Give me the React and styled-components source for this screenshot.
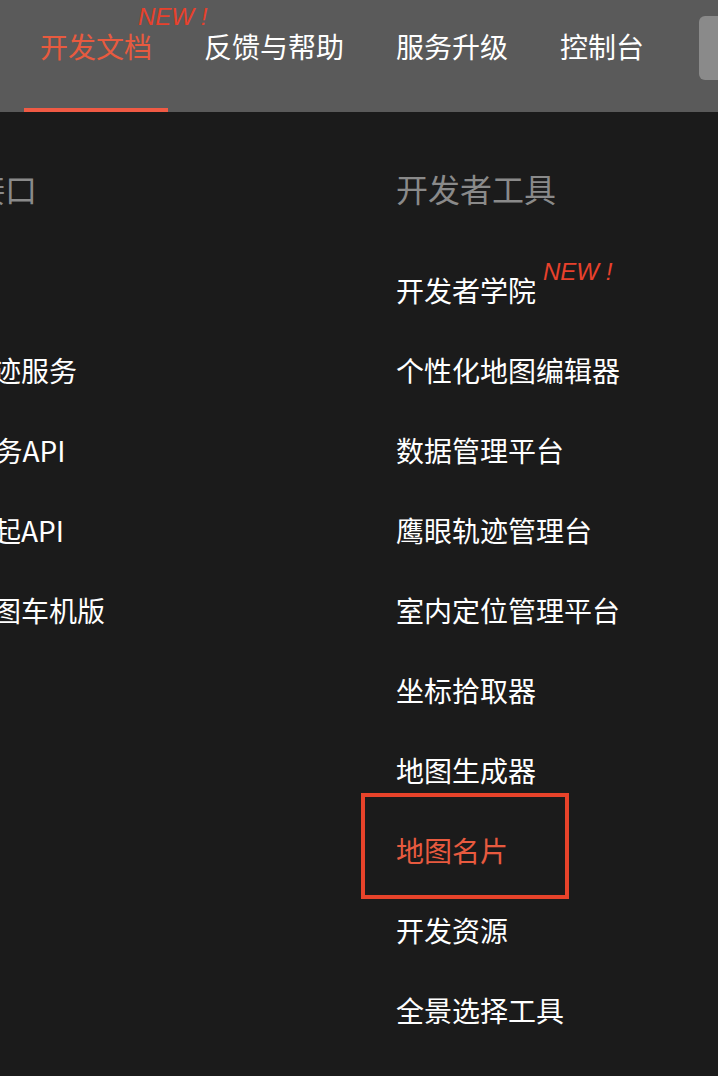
import React from "react";
import styled, { createGlobalStyle } from "styled-components";

const navItems = [
  { text: "开发文档", active: true, badge: true },
  { text: "反馈与帮助" },
  { text: "服务升级" },
  { text: "控制台" },
];

const columns = [
  {
    title: "服务接口",
    items: [
      { text: "" },
      { text: "鹰眼轨迹服务" },
      { text: "Web服务API" },
      { text: "地图调起API" },
      { text: "百度地图车机版" },
    ],
  },
  {
    title: "开发者工具",
    items: [
      { text: "开发者学院", badge: true },
      { text: "个性化地图编辑器" },
      { text: "数据管理平台" },
      { text: "鹰眼轨迹管理台" },
      { text: "室内定位管理平台" },
      { text: "坐标拾取器" },
      { text: "地图生成器" },
      { text: "地图名片", active: true, boxed: true },
      { text: "开发资源" },
      { text: "全景选择工具" },
    ],
  },
];

function App() {
  return (
    <>
      <GlobalStyle />
      <Page>
        <TopNav>
          {navItems.map((item) => (
            <NavItem key={item.text} $active={item.active}>
              <NavLabel>
                {item.text}
                {item.badge && <NewBadge $nav>NEW !</NewBadge>}
              </NavLabel>
            </NavItem>
          ))}
          <SearchBox />
        </TopNav>
        <Dropdown>
          {columns.map((col) => (
            <Column key={col.title}>
              <ColumnTitle>{col.title}</ColumnTitle>
              {col.items.map((item, i) => (
                <MenuItem key={i} $active={item.active} $boxed={item.boxed}>
                  {item.text && (
                    <ItemLabel>
                      {item.text}
                      {item.badge && <NewBadge>NEW !</NewBadge>}
                    </ItemLabel>
                  )}
                </MenuItem>
              ))}
            </Column>
          ))}
        </Dropdown>
      </Page>
    </>
  );
}

export default App;

const GlobalStyle = createGlobalStyle`
  html, body {
    margin: 0;
    padding: 0;
    background: #1b1b1b;
    overflow: hidden;
  }
  body {
    font-family: "Noto Sans CJK SC", "Noto Sans", sans-serif;
  }
`;

const Page = styled.div`
  width: 718px;
  height: 1076px;
  overflow: hidden;
  background: #1b1b1b;
`;

const TopNav = styled.div`
  display: flex;
  gap: 20px;
  height: 112px;
  padding-left: 24px;
  background: #5a5a5a;
  overflow: hidden;
  box-sizing: border-box;
`;

const NavItem = styled.div`
  flex-shrink: 0;
  height: 112px;
  padding: 26px 16px 0;
  box-sizing: border-box;
  color: ${(p) => (p.$active ? "#e85a3f" : "#ffffff")};
  border-bottom: 4px solid ${(p) => (p.$active ? "#f05a44" : "transparent")};
  font-size: 28px;
  line-height: 40px;
`;

const NavLabel = styled.span`
  position: relative;
  display: inline-block;
  white-space: nowrap;
`;

const NewBadge = styled.span`
  position: absolute;
  left: ${(p) => (p.$nav ? "calc(100% - 14px)" : "calc(100% + 7px)")};
  top: ${(p) => (p.$nav ? "-21px" : "10px")};
  font-family: "Liberation Sans", Arial, sans-serif;
  font-style: italic;
  font-size: 24px;
  line-height: 24px;
  color: #e8412c;
  white-space: nowrap;
`;

const SearchBox = styled.div`
  flex-shrink: 0;
  width: 120px;
  height: 64px;
  margin: 16px 0 0 19px;
  border-radius: 6px;
  background: #8a8a8a;
`;

const Dropdown = styled.div`
  display: flex;
  margin-left: -91px;
  padding-top: 56px;
`;

const Column = styled.div`
  flex-shrink: 0;
  width: 487px;
  display: flex;
  flex-direction: column;
`;

const ColumnTitle = styled.div`
  height: 40px;
  margin-bottom: 42px;
  font-size: 32px;
  line-height: 40px;
  color: #8a8a8a;
  white-space: nowrap;
`;

const MenuItem = styled.div`
  position: relative;
  height: 80px;
  font-size: 28px;
  line-height: 80px;
  color: ${(p) => (p.$active ? "#e85a3f" : "#ffffff")};
  white-space: nowrap;

  &::after {
    content: "";
    display: ${(p) => (p.$boxed ? "block" : "none")};
    position: absolute;
    left: -35px;
    top: -17px;
    width: 208px;
    height: 106px;
    box-sizing: border-box;
    border: 4px solid #e8432a;
  }
`;

const ItemLabel = styled.span`
  position: relative;
  display: inline-block;
`;
